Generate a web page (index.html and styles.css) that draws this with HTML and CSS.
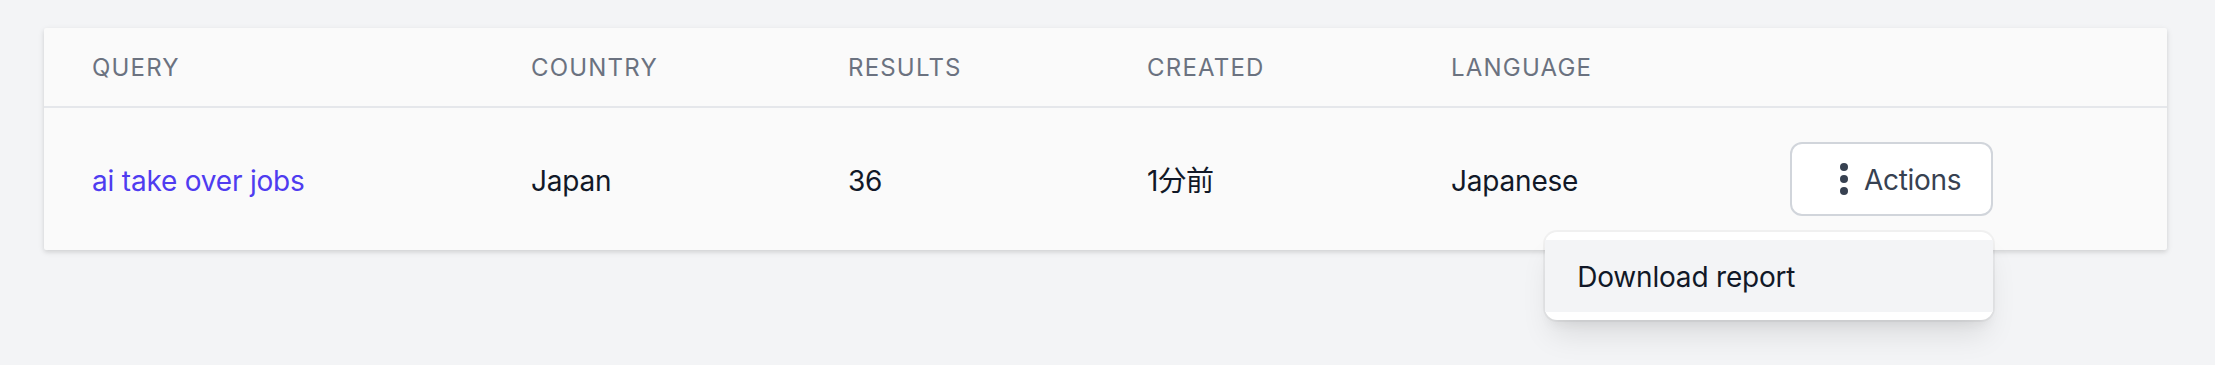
FILE: index.html
```html
<!DOCTYPE html>
<html lang="en">
<head>
<meta charset="utf-8">
<title>Queries</title>
<link rel="stylesheet" href="styles.css">
</head>
<body>
<div class="page">
  <div class="card">
    <div class="row head">
      <div class="cell">Query</div>
      <div class="cell">Country</div>
      <div class="cell">Results</div>
      <div class="cell">Created</div>
      <div class="cell">Language</div>
      <div class="cell"></div>
    </div>
    <div class="row body">
      <div class="cell"><a class="link" href="#">ai take over jobs</a></div>
      <div class="cell">Japan</div>
      <div class="cell">36</div>
      <div class="cell">1分前</div>
      <div class="cell">Japanese</div>
      <div class="cell cell-actions">
        <div class="actions">
          <button class="btn" type="button">
            <svg class="dots" viewBox="0 0 20 20" width="40" height="40" aria-hidden="true">
              <circle cx="10" cy="4" r="2" fill="#374151"/>
              <circle cx="10" cy="10" r="2" fill="#374151"/>
              <circle cx="10" cy="16" r="2" fill="#374151"/>
            </svg>
            <span>Actions</span>
          </button>
          <div class="menu">
            <a class="menu-item active" href="#">Download report</a>
          </div>
        </div>
      </div>
    </div>
  </div>
</div>
</body>
</html>
```

FILE: styles.css
```css
* { box-sizing: border-box; }
html, body { margin: 0; padding: 0; }
body {
  background: #f3f4f6;
  font-family: Inter, "Noto Sans CJK JP", "Liberation Sans", sans-serif;
  color: #111827;
  width: 2215px;
  height: 365px;
  overflow: hidden;
}
.page {
  padding: 28px 48px 0 44px;
}
.card {
  background: #fafafa;
  border-radius: 2px;
  box-shadow: 0 2px 6px rgba(0, 0, 0, 0.10), 0 2px 4px rgba(0, 0, 0, 0.06);
}
.row {
  display: grid;
  grid-template-columns: 439px 317px 299px 304px 339px 1fr;
  align-items: center;
}
.cell {
  padding: 0 48px;
  white-space: nowrap;
}
.head {
  height: 80px;
  padding-top: 2px;
  border-bottom: 2px solid #e5e7eb;
}
.head .cell {
  font-size: 24px;
  line-height: 32px;
  letter-spacing: 0.05em;
  text-transform: uppercase;
  color: #6b7280;
  font-weight: 400;
}
.body {
  height: 142px;
  padding-top: 4px;
}
.body .cell {
  font-size: 28px;
  line-height: 40px;
  letter-spacing: -0.2px;
  color: #111827;
}
.body .cell-actions {
  display: flex;
  margin-top: -4px;
}
.link {
  color: #4f3cf0;
  text-decoration: none;
}
.actions {
  position: relative;
}
.btn {
  display: inline-flex;
  align-items: center;
  height: 74px;
  padding: 2px 30px 0 32px;
  background: #ffffff;
  border: 2px solid #d1d5db;
  border-radius: 12px;
  font-family: inherit;
  font-size: 28px;
  line-height: 40px;
  letter-spacing: -0.3px;
  color: #374151;
  cursor: pointer;
}
.dots {
  display: block;
  margin-top: -2px;
}
.menu {
  position: absolute;
  right: 0;
  top: calc(100% + 16px);
  width: 448px;
  padding: 8px 0;
  background: #ffffff;
  border-radius: 12px;
  box-shadow: 0 20px 30px -6px rgba(0, 0, 0, 0.10), 0 8px 12px -4px rgba(0, 0, 0, 0.06), 0 0 0 2px rgba(0, 0, 0, 0.04);
  z-index: 10;
}
.menu-item {
  display: block;
  padding: 17px 32px 15px;
  font-size: 28px;
  line-height: 40px;
  letter-spacing: -0.2px;
  color: #111827;
  text-decoration: none;
}
.menu-item.active {
  background: #f3f4f6;
}
```
